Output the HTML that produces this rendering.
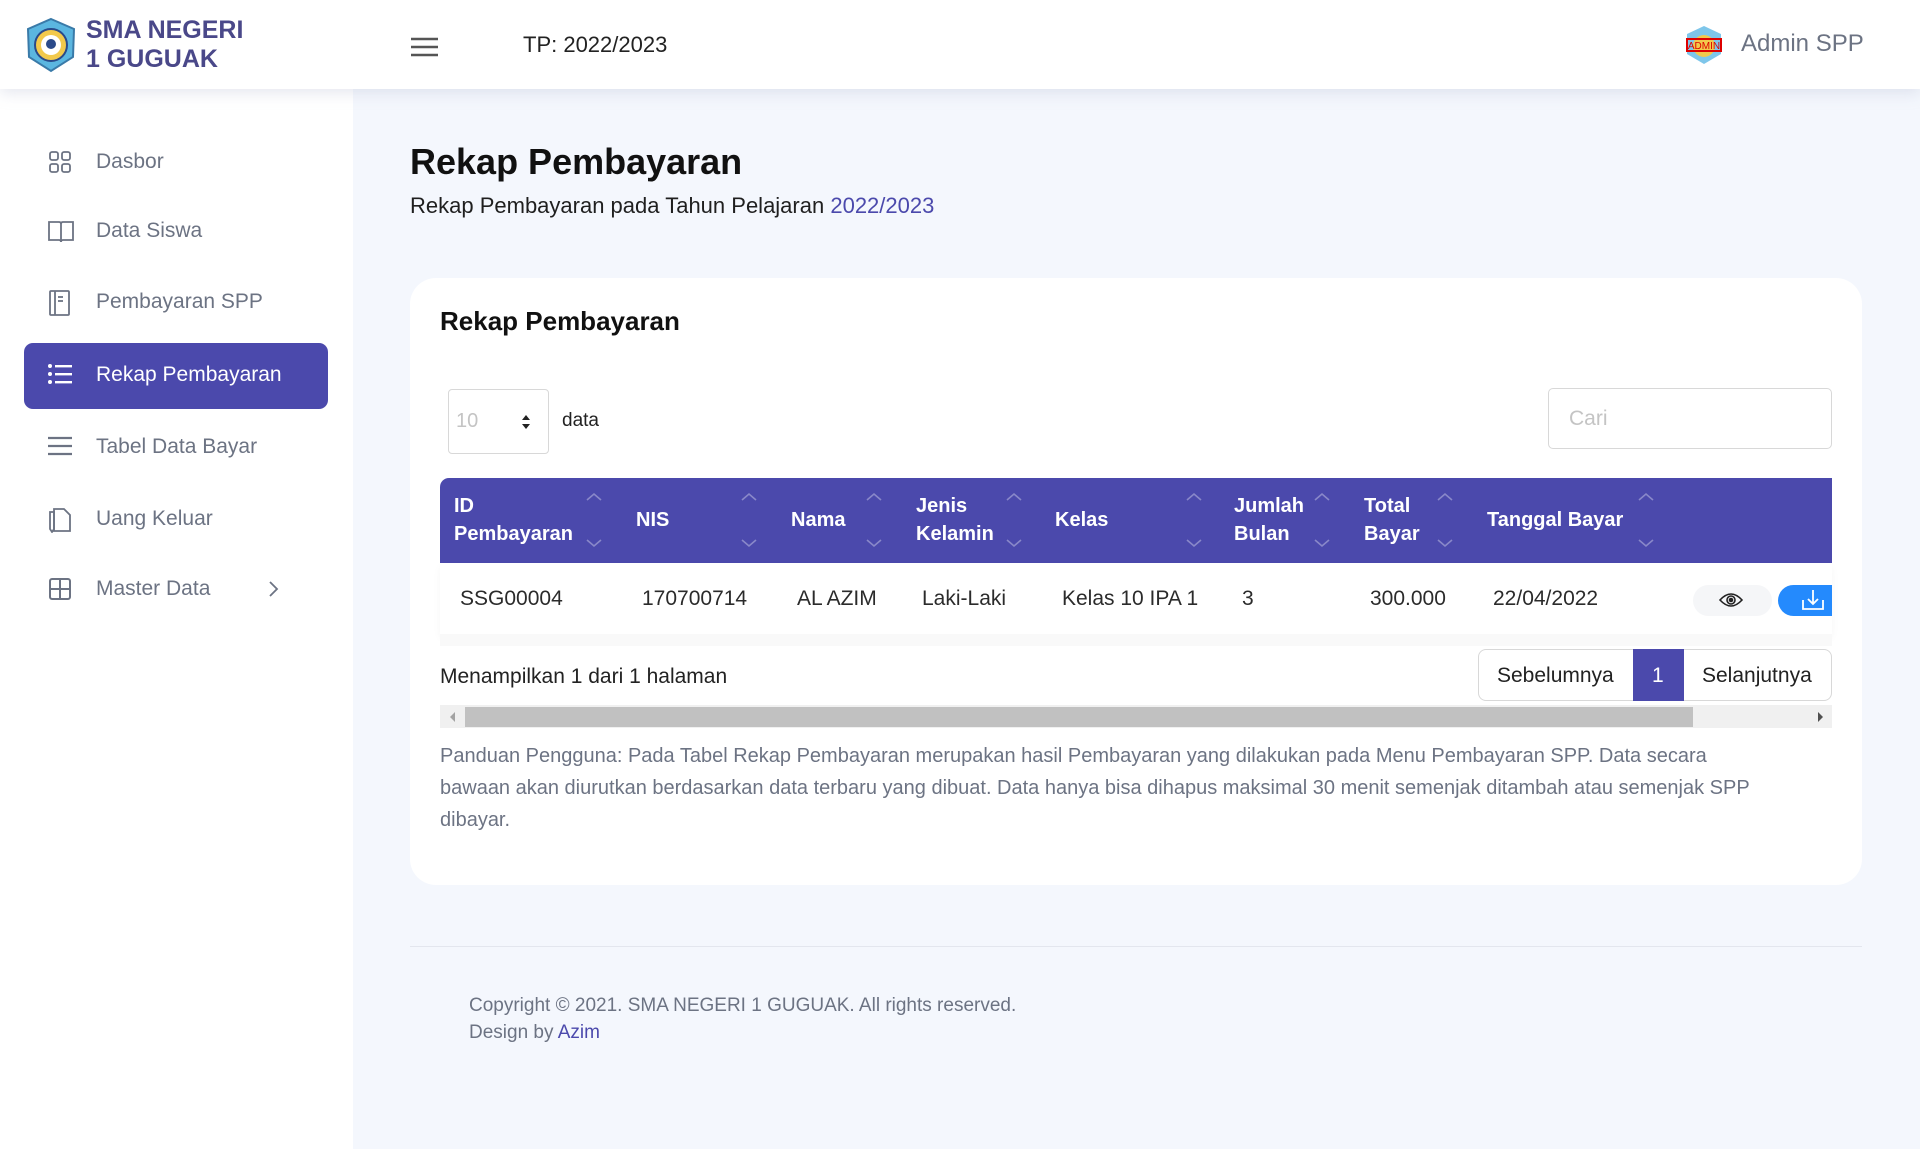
<!DOCTYPE html>
<html><head><meta charset="utf-8"><style>
*{box-sizing:border-box;margin:0;padding:0}
body{width:1920px;height:1149px;overflow:hidden;background:#f4f7fd;font-family:"Liberation Sans",sans-serif;position:relative;color:#1f1f1f}
.abs{position:absolute;white-space:nowrap}
#hdr{position:absolute;left:0;top:0;width:1920px;height:89px;background:#fff;box-shadow:0 4px 14px rgba(180,185,210,.35);z-index:3}
#side{position:absolute;left:0;top:89px;width:353px;height:1060px;background:#fff}
.nav{position:absolute;left:48px;font-size:21px;color:#6c7383;height:24px}
.nav svg{position:absolute;left:0;top:0}
.nav span{position:absolute;left:48px;top:0;line-height:24px;white-space:nowrap}
#card{position:absolute;left:410px;top:278px;width:1452px;height:607px;background:#fff;border-radius:26px}
.ht{position:absolute;color:#fff;font-weight:bold;font-size:20px;line-height:28px}
.td{position:absolute;top:587px;font-size:21px;color:#2b2b2b}
</style></head><body>
<div id="hdr">
 <svg class="abs" style="left:24px;top:17px" width="54" height="56" viewBox="0 0 54 56"><path d="M27 2 L50 12 L49 40 L27 54 L5 40 L4 12 Z" fill="#5bb6e0" stroke="#3a7aa8" stroke-width="2"/><circle cx="27" cy="28" r="16" fill="#f2c94c" stroke="#2a4a8a" stroke-width="2"/><circle cx="27" cy="28" r="10" fill="#fff"/><circle cx="27" cy="27" r="5" fill="#2a4a8a"/></svg>
 <div class="abs" style="left:86px;top:16px;font-size:25px;font-weight:bold;color:#4a4889;line-height:29px">SMA NEGERI<br>1 GUGUAK</div>
 <svg class="abs" style="left:411px;top:37px" width="27" height="20"><g stroke="#555" stroke-width="2.5"><line x1="0" y1="2" x2="27" y2="2"/><line x1="0" y1="10" x2="27" y2="10"/><line x1="0" y1="18" x2="27" y2="18"/></g></svg>
 <div class="abs" style="left:523px;top:32px;font-size:22px;color:#222">TP: 2022/2023</div>
 <svg class="abs" style="left:1683px;top:24px" width="42" height="42" viewBox="0 0 42 42"><path d="M21 2 L38 10 L38 30 L21 40 L4 30 L4 10 Z" fill="#7ec6ea"/><circle cx="21" cy="22" r="11" fill="#f2c94c"/><rect x="4" y="15" width="34" height="12" fill="none" stroke="#d00" stroke-width="2"/><text x="21" y="25" font-size="10" fill="#d00" text-anchor="middle" font-family="Liberation Sans">ADMIN</text></svg>
 <div class="abs" style="left:1741px;top:30px;font-size:24px;color:#6c7383">Admin SPP</div>
</div>
<div id="side"></div>
<div class="abs" style="left:24px;top:343px;width:304px;height:66px;background:#4b49ac;border-radius:9px"></div>
<div class="nav" style="top:150px"><svg width="24" height="24" viewBox="0 0 24 24" fill="none" stroke="#6c7383" stroke-width="1.8"><rect x="2" y="2" width="8" height="8" rx="2"/><rect x="14" y="2" width="8" height="8" rx="2"/><rect x="2" y="14" width="8" height="8" rx="2"/><rect x="14" y="14" width="8" height="8" rx="2"/></svg><span>Dasbor</span></div>
<div class="nav" style="top:219px"><svg width="26" height="24" viewBox="0 0 26 24" fill="none" stroke="#6c7383" stroke-width="1.8"><path d="M1 3 H11 Q13 3 13 5 V23 Q13 21 11 21 H1 Z M25 3 H15 Q13 3 13 5 V23 Q13 21 15 21 H25 Z"/></svg><span>Data Siswa</span></div>
<div class="nav" style="top:290px"><svg width="24" height="26" viewBox="0 0 24 26" fill="none" stroke="#6c7383" stroke-width="1.8"><rect x="2" y="1" width="19" height="24" rx="1"/><line x1="7" y1="1" x2="7" y2="25"/><line x1="10" y1="7" x2="15" y2="7"/><line x1="10" y1="11" x2="15" y2="11"/></svg><span>Pembayaran SPP</span></div>
<div class="nav" style="top:363px;color:#fff"><svg width="24" height="22" viewBox="0 0 24 22" fill="#fff"><circle cx="2" cy="3" r="2"/><circle cx="2" cy="11" r="2"/><circle cx="2" cy="19" r="2"/><rect x="7" y="2" width="17" height="2.4"/><rect x="7" y="10" width="17" height="2.4"/><rect x="7" y="18" width="17" height="2.4"/></svg><span>Rekap Pembayaran</span></div>
<div class="nav" style="top:435px"><svg width="24" height="22" viewBox="0 0 24 22"><g stroke="#6c7383" stroke-width="2.2"><line x1="0" y1="3" x2="24" y2="3"/><line x1="0" y1="11" x2="24" y2="11"/><line x1="0" y1="19" x2="24" y2="19"/></g></svg><span>Tabel Data Bayar</span></div>
<div class="nav" style="top:507px"><svg width="24" height="26" viewBox="0 0 24 26" fill="none" stroke="#6c7383" stroke-width="1.8"><path d="M6 2 H16 L22 8 V24 H6 Z"/><path d="M2 5 V22 L4 25 L6 22 V5 Z"/></svg><span>Uang Keluar</span></div>
<div class="nav" style="top:577px"><svg width="24" height="24" viewBox="0 0 24 24" fill="none" stroke="#6c7383" stroke-width="2"><rect x="2" y="2" width="20" height="20" rx="2"/><line x1="12" y1="2" x2="12" y2="22"/><line x1="2" y1="12" x2="22" y2="12"/></svg><span>Master Data</span></div>
<svg class="abs" style="left:268px;top:580px" width="12" height="18"><path d="M2 2 L9 9 L2 16" fill="none" stroke="#6c7383" stroke-width="1.8"/></svg>

<div class="abs" style="left:410px;top:141px;font-size:36px;font-weight:bold;color:#111">Rekap Pembayaran</div>
<div class="abs" style="left:410px;top:193px;font-size:22px;color:#1f1f1f">Rekap Pembayaran pada Tahun Pelajaran <span style="color:#4b49ac">2022/2023</span></div>
<div id="card"></div>
<div class="abs" style="left:440px;top:306px;font-size:26px;font-weight:bold;color:#111">Rekap Pembayaran</div>
<div class="abs" style="left:448px;top:389px;width:101px;height:65px;border:1px solid #d8d8d8;border-radius:4px"></div>
<div class="abs" style="left:456px;top:410px;font-size:20px;color:#c4c4c4">10</div>
<svg class="abs" style="left:521px;top:414px" width="10" height="16"><path d="M1 6 L5 1 L9 6Z M1 10 L5 15 L9 10Z" fill="#222"/></svg>
<div class="abs" style="left:562px;top:410px;font-size:19px;color:#222">data</div>
<div class="abs" style="left:1548px;top:388px;width:284px;height:61px;border:1px solid #d8d8d8;border-radius:5px"></div>
<div class="abs" style="left:1569px;top:407px;font-size:21px;color:#c4c4c4">Cari</div>
<div class="abs" style="left:440px;top:478px;width:1392px;height:85px;background:#4b49ac;border-radius:9px 0 0 0"></div>
<div class="ht" style="left:454px;top:492px">ID<br>Pembayaran</div>
<div class="ht" style="left:636px;top:506px">NIS</div>
<div class="ht" style="left:791px;top:506px">Nama</div>
<div class="ht" style="left:916px;top:492px">Jenis<br>Kelamin</div>
<div class="ht" style="left:1055px;top:506px">Kelas</div>
<div class="ht" style="left:1234px;top:492px">Jumlah<br>Bulan</div>
<div class="ht" style="left:1364px;top:492px">Total<br>Bayar</div>
<div class="ht" style="left:1487px;top:506px">Tanggal Bayar</div>
<svg class="abs" style="left:0;top:0;pointer-events:none" width="1920" height="600"><g fill="none" stroke="rgba(255,255,255,.35)" stroke-width="1.6">
<path d="M587 500 l7 -6 l7 6 M587 540 l7 6 l7 -6"/>
<path d="M742 500 l7 -6 l7 6 M742 540 l7 6 l7 -6"/>
<path d="M867 500 l7 -6 l7 6 M867 540 l7 6 l7 -6"/>
<path d="M1007 500 l7 -6 l7 6 M1007 540 l7 6 l7 -6"/>
<path d="M1187 500 l7 -6 l7 6 M1187 540 l7 6 l7 -6"/>
<path d="M1315 500 l7 -6 l7 6 M1315 540 l7 6 l7 -6"/>
<path d="M1438 500 l7 -6 l7 6 M1438 540 l7 6 l7 -6"/>
<path d="M1639 500 l7 -6 l7 6 M1639 540 l7 6 l7 -6"/>
</g></svg>
<div class="abs" style="left:440px;top:563px;width:1392px;height:71px;background:#fff;box-shadow:0 4px 8px rgba(0,0,0,.04)"></div>
<div class="abs" style="left:440px;top:634px;width:1392px;height:12px;background:#f9f9f9"></div>
<div class="td" style="left:460px">SSG00004</div>
<div class="td" style="left:642px">170700714</div>
<div class="td" style="left:797px">AL AZIM</div>
<div class="td" style="left:922px">Laki-Laki</div>
<div class="td" style="left:1062px">Kelas 10 IPA 1</div>
<div class="td" style="left:1242px">3</div>
<div class="td" style="left:1370px">300.000</div>
<div class="td" style="left:1493px">22/04/2022</div>
<div class="abs" style="left:1693px;top:585px;width:79px;height:31px;background:#f5f6f8;border-radius:16px"></div>
<svg class="abs" style="left:1719px;top:591px" width="24" height="18" viewBox="0 0 24 18" fill="none" stroke="#222" stroke-width="1.6"><path d="M1 9 Q12 -3 23 9 Q12 21 1 9Z"/><circle cx="12" cy="9" r="4"/><circle cx="12" cy="9" r="1.5" fill="#222"/></svg>
<div class="abs" style="left:1778px;top:585px;width:54px;height:31px;background:#248afd;border-radius:16px 0 0 16px"></div>
<svg class="abs" style="left:1802px;top:589px" width="22" height="22" viewBox="0 0 22 22" fill="none" stroke="#fff" stroke-width="1.8"><path d="M1 11 V20 H21 V11 M11 1 V15 M6 10 L11 15 L16 10"/></svg>
<div class="abs" style="left:440px;top:665px;font-size:21px;color:#222">Menampilkan 1 dari 1 halaman</div>
<div class="abs" style="left:1478px;top:649px;width:354px;height:52px;border:1px solid #d8d8d8;border-radius:8px;background:#fff"></div>
<div class="abs" style="left:1633px;top:649px;width:51px;height:52px;background:#4b49ac"></div>
<div class="abs" style="left:1497px;top:664px;font-size:21px;color:#222">Sebelumnya</div>
<div class="abs" style="left:1652px;top:664px;font-size:21px;color:#fff">1</div>
<div class="abs" style="left:1702px;top:664px;font-size:21px;color:#222">Selanjutnya</div>
<div class="abs" style="left:440px;top:705px;width:1392px;height:23px;background:#f0f0f0"></div>
<div class="abs" style="left:465px;top:707px;width:1228px;height:20px;background:#c1c1c1"></div>
<svg class="abs" style="left:448px;top:711px" width="8" height="12"><path d="M7 1 L2 6 L7 11Z" fill="#a3a3a3"/></svg>
<svg class="abs" style="left:1817px;top:711px" width="8" height="12"><path d="M1 1 L6 6 L1 11Z" fill="#505050"/></svg>
<div class="abs" style="left:440px;top:740px;font-size:20px;color:#6c7383;line-height:32px">Panduan Pengguna: Pada Tabel Rekap Pembayaran merupakan hasil Pembayaran yang dilakukan pada Menu Pembayaran SPP. Data secara<br>bawaan akan diurutkan berdasarkan data terbaru yang dibuat. Data hanya bisa dihapus maksimal 30 menit semenjak ditambah atau semenjak SPP<br>dibayar.</div>
<div class="abs" style="left:410px;top:946px;width:1452px;height:1px;background:#e3e6ee"></div>
<div class="abs" style="left:469px;top:992px;font-size:19px;color:#6c7383;line-height:27px">Copyright © 2021. SMA NEGERI 1 GUGUAK. All rights reserved.<br>Design by <span style="color:#4b49ac">Azim</span></div>
</body></html>
